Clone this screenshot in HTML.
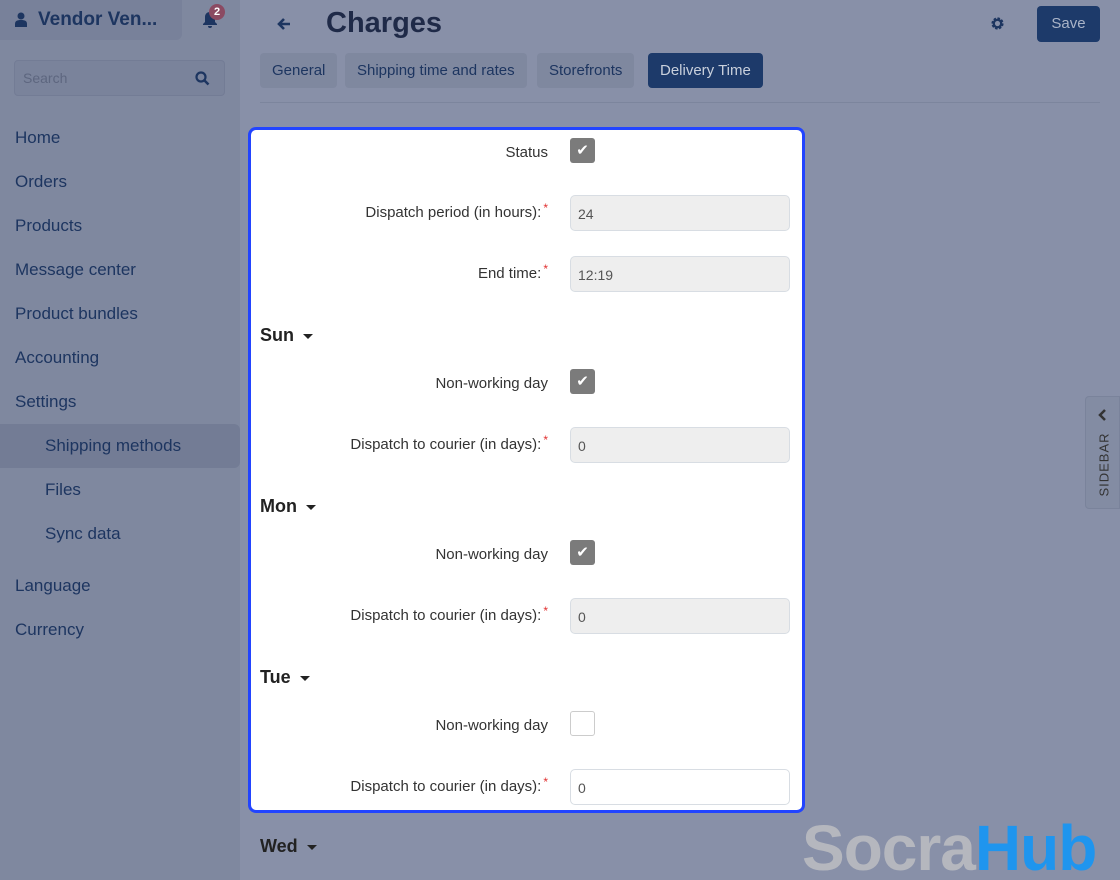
<!DOCTYPE html>
<html style="overflow:hidden;height:880px"><head><meta charset="utf-8"><style>
*{box-sizing:border-box;margin:0;padding:0}
body{width:1120px;height:880px;overflow:hidden;background:#8890a8;font-family:"Liberation Sans","DejaVu Sans",sans-serif;position:relative;color:#1f2d4d}
.side{position:absolute;left:0;top:0;width:240px;height:880px;background:#7f889f}
.vend{position:absolute;left:0;top:0;width:182px;height:40px;background:#78819a;border-radius:0 0 6px 0;font-weight:bold;font-size:19px;color:#1d3560;padding:9px 0 0 38px}
.search{position:absolute;left:14px;top:60px;width:211px;height:36px;background:#7a839b;border:1px solid #737c95;border-radius:4px;font-size:14px;color:#5d667f;padding:9px 0 0 8px}
.nav{position:absolute;left:15px;font-size:17px;color:#1d3560}
.sub{left:45px}
.active{position:absolute;left:0;top:424px;width:240px;height:44px;background:#737c95;border-radius:0 6px 6px 0}
.tab{position:absolute;top:53px;height:35px;background:#7f889f;border-radius:4px;font-size:15px;color:#1d3560;padding:9px 12px 0}
.card{position:absolute;left:248px;top:127px;width:557px;height:686px;background:#fff;border:3px solid #2244ff;border-radius:8px}
.lbl{position:absolute;right:254px;font-size:15px;color:#333;text-align:right;white-space:nowrap}
.lbl i{color:#e03030;font-style:normal;font-size:12px;position:relative;top:-5px;margin-left:2px}
.inp{position:absolute;left:319px;width:220px;height:36px;background:#eee;border:1px solid #d8dde3;border-radius:5px;font-size:14px;color:#555;padding:10px 0 0 7px}
.cb{position:absolute;left:319px;width:25px;height:25px;background:#7b7b7b;border-radius:3px;color:#fff;font-size:15px;text-align:center;line-height:25px}
.cb.off{background:#fff;border:1px solid #ccc}
.day{position:absolute;left:9px;font-weight:bold;font-size:18px;color:#222}
.day:after{content:"";display:inline-block;margin-left:9px;border:5px solid transparent;border-top:5px solid #222;vertical-align:middle;position:relative;top:3px}
</style></head><body>
<div class="side">
 <div class="vend"><svg style="position:absolute;left:15px;top:12px" width="12" height="15" viewBox="0 0 12 15"><circle cx="6" cy="4" r="3.5" fill="#1d3560"/><path d="M0 15v-3c0-3 2-4 6-4s6 1 6 4v3z" fill="#1d3560"/></svg>Vendor Ven...</div>
 <svg style="position:absolute;left:202px;top:11px" width="16" height="17" viewBox="0 0 16 17"><path d="M8 1c-3 0-5 2-5 5v5l-2 2v1h14v-1l-2-2V6c0-3-2-5-5-5zM6 15a2 2 0 004 0z" fill="#1d3560"/></svg>
 <div style="position:absolute;left:209px;top:4px;width:16px;height:16px;border-radius:8px;background:#8b4a62;color:#fff;font-size:11px;font-weight:bold;text-align:center;line-height:16px">2</div>
 <div class="search">Search<svg style="position:absolute;right:14px;top:10px" width="15" height="15" viewBox="0 0 15 15"><circle cx="6" cy="6" r="4.5" stroke="#1d3560" stroke-width="2.2" fill="none"/><path d="M9.5 9.5L13.5 13.5" stroke="#1d3560" stroke-width="2.5"/></svg></div>
 <div class="active"></div>
 <div class="nav" style="top:128px">Home</div>
 <div class="nav" style="top:172px">Orders</div>
 <div class="nav" style="top:216px">Products</div>
 <div class="nav" style="top:260px">Message center</div>
 <div class="nav" style="top:304px">Product bundles</div>
 <div class="nav" style="top:348px">Accounting</div>
 <div class="nav" style="top:392px">Settings</div>
 <div class="nav sub" style="top:436px">Shipping methods</div>
 <div class="nav sub" style="top:480px">Files</div>
 <div class="nav sub" style="top:524px">Sync data</div>
 <div class="nav" style="top:576px">Language</div>
 <div class="nav" style="top:620px">Currency</div>
</div>
<svg style="position:absolute;left:276px;top:16px" width="16" height="16" viewBox="0 0 16 16"><path d="M14 8H3M8 3L3 8l5 5" stroke="#1d3560" stroke-width="2.6" fill="none"/></svg>
<div style="position:absolute;left:326px;top:7px;font-size:29px;font-weight:bold;color:#1f2a48">Charges</div>
<svg style="position:absolute;left:990px;top:16px" width="15" height="15" viewBox="0 0 16 16"><circle cx="8" cy="8" r="5" fill="none" stroke="#1d3560" stroke-width="3" stroke-dasharray="2.4 1.5"/><circle cx="8" cy="8" r="4" fill="none" stroke="#1d3560" stroke-width="2.5"/></svg>
<div style="position:absolute;left:1037px;top:6px;width:63px;height:36px;background:#1d3a6a;border-radius:4px;color:#aab4c8;font-size:15px;text-align:center;line-height:36px">Save</div>
<div class="tab" style="left:260px">General</div>
<div class="tab" style="left:345px">Shipping time and rates</div>
<div class="tab" style="left:537px">Storefronts</div>
<div class="tab" style="left:648px;background:#1d3a6a;color:#c9d0dc">Delivery Time</div>
<div style="position:absolute;left:260px;top:102px;width:840px;height:1px;background:#7c859d"></div>
<div style="position:absolute;left:1085px;top:396px;width:35px;height:113px;background:#838ca3;border:1px solid #7a839b;border-radius:4px 0 0 4px"><svg style="position:absolute;left:11px;top:12px" width="10" height="12" viewBox="0 0 10 12"><path d="M8 1L3 6l5 5" stroke="#333" stroke-width="2.5" fill="none"/></svg><div style="position:absolute;left:-17px;top:60px;transform:rotate(-90deg);font-size:13px;color:#333;letter-spacing:1px;width:70px;text-align:center">SIDEBAR</div></div>
<div class="card">
 <div class="lbl" style="top:14px">Status</div><div class="cb" style="top:8px">✔</div>
 <div class="lbl" style="top:74px">Dispatch period (in hours):<i>*</i></div><div class="inp" style="top:65px">24</div>
 <div class="lbl" style="top:135px">End time:<i>*</i></div><div class="inp" style="top:126px">12:19</div>
 <div class="day" style="top:195px">Sun</div>
 <div class="lbl" style="top:245px">Non-working day</div><div class="cb" style="top:239px">✔</div>
 <div class="lbl" style="top:306px">Dispatch to courier (in days):<i>*</i></div><div class="inp" style="top:297px">0</div>
 <div class="day" style="top:366px">Mon</div>
 <div class="lbl" style="top:416px">Non-working day</div><div class="cb" style="top:410px">✔</div>
 <div class="lbl" style="top:477px">Dispatch to courier (in days):<i>*</i></div><div class="inp" style="top:468px">0</div>
 <div class="day" style="top:537px">Tue</div>
 <div class="lbl" style="top:587px">Non-working day</div><div class="cb off" style="top:581px"></div>
 <div class="lbl" style="top:648px">Dispatch to courier (in days):<i>*</i></div><div class="inp" style="top:639px;background:#fff">0</div>
</div>
<div class="day" style="position:absolute;left:260px;top:836px">Wed</div>
<div style="position:absolute;left:802px;top:812px;height:68px;overflow:hidden;font-size:64px;font-weight:bold;letter-spacing:-1px;color:#b5b7be;line-height:72px">Socra<span style="color:#1f95ee">Hub</span></div>
</body></html>
